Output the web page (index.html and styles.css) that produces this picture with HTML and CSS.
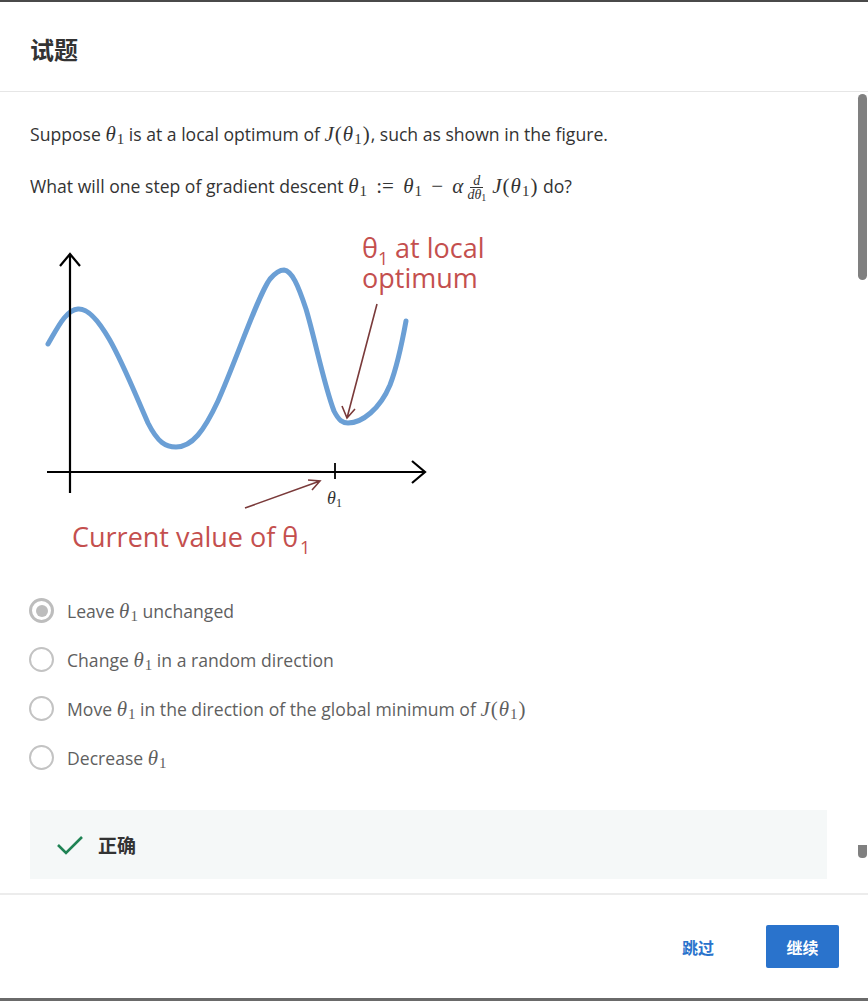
FILE: index.html
```html
<!DOCTYPE html>
<html lang="zh">
<head>
<meta charset="utf-8">
<title>试题</title>
<link rel="stylesheet" href="styles.css">
</head>
<body>
<div class="page">
  <header class="hdr"><h1 class="title">试题</h1></header>
  <main class="content">
    <p class="q">Suppose <span class="m"><i>θ</i><span class="sb">1</span></span> is at a local optimum of <span class="m"><i>J</i><span class="pa">(</span><i>θ</i><span class="sb">1</span><span class="pa">)</span></span>, such as shown in the figure.</p>
    <p class="q q2">What will one step of gradient descent <span class="m"><i>θ</i><span class="sb">1</span> <span class="op">:=</span> <i>θ</i><span class="sb">1</span> <span class="op">−</span> <i>α</i><span class="frac"><span class="num"><i>d</i></span><span class="den"><i>dθ</i><span class="sb2">1</span></span></span><i>J</i><span class="pa">(</span><i>θ</i><span class="sb">1</span><span class="pa">)</span></span> do?</p>
    <svg class="fig" width="470" height="345" viewBox="0 0 470 345">
      <path d="M18,121 C28,104 36,87 48,86 C72,84 100,160 118,200 C128,220 136,224 146,224 C162,224 174,208 188,178 C206,138 228,72 240,56 C246,49 250,47 254,47 C262,48 268,62 276,86 C285,116 294,162 304,188 C309,198 313,200 318,200 C332,200 350,186 360,162 C367,144 372,120 376,98" fill="none" stroke="#6b9fd5" stroke-width="5" stroke-linecap="round"/>
      <path d="M40,31 L40,270 M30,43 L40,31 L50,43" fill="none" stroke="#000" stroke-width="2.2"/>
      <path d="M17,249 L395,249 M382,238 L395,249 L382,260" fill="none" stroke="#000" stroke-width="2.2"/>
      <path d="M305,240 L305,256" stroke="#000" stroke-width="1.8"/>
      <text x="297" y="281" class="axl">θ</text>
      <text x="306" y="284" class="axs">1</text>
      <path d="M215,285 L290,258 M278,257 L290,258 L282,267" fill="none" stroke="#7a3a3a" stroke-width="1.6"/>
      <path d="M347,81 L317,195 M312,183 L317,195 L325,186" fill="none" stroke="#7a3a3a" stroke-width="1.6"/>
      <text x="332" y="35" class="red">θ</text>
      <text x="348" y="42" class="red rs">1</text>
      <text x="365" y="35" class="red">at local</text>
      <text x="332" y="65" class="red">optimum</text>
      <text x="42" y="324" class="red">Current value of θ</text>
      <text x="270" y="331" class="red rs">1</text>
    </svg>
    <ul class="opts">
      <li class="opt"><span class="radio sel"></span><span>Leave <span class="m"><i>θ</i><span class="sb">1</span></span> unchanged</span></li>
      <li class="opt"><span class="radio"></span><span>Change <span class="m"><i>θ</i><span class="sb">1</span></span> in a random direction</span></li>
      <li class="opt"><span class="radio"></span><span>Move <span class="m"><i>θ</i><span class="sb">1</span></span> in the direction of the global minimum of <span class="m"><i>J</i><span class="pa">(</span><i>θ</i><span class="sb">1</span><span class="pa">)</span></span></span></li>
      <li class="opt"><span class="radio"></span><span>Decrease <span class="m"><i>θ</i><span class="sb">1</span></span></span></li>
    </ul>
    <div class="correct">
      <svg class="chk" width="28" height="22" viewBox="0 0 28 22"><path d="M2,11 L10,19 L26,3" fill="none" stroke="#1f8354" stroke-width="2.6"/></svg>
      <span class="ok">正确</span>
    </div>
    <div class="thumb"></div>
    <div class="thumb2"></div>
  </main>
  <footer class="ftr">
    <span class="skip">跳过</span>
    <span class="btn">继续</span>
  </footer>
</div>
</body>
</html>
```
FILE: styles.css
```css
* { box-sizing: border-box; }
html, body { margin: 0; padding: 0; background: #fff; }
body { font-family: "Open Sans", "Noto Sans CJK SC", sans-serif; color: #333; }
.page {
  width: 868px; height: 1001px;
  border-top: 2px solid #4a4a4a;
  border-bottom: 3px solid #6a6a6a;
  display: flex; flex-direction: column;
  overflow: hidden;
}
.hdr {
  height: 90px; flex: none;
  border-bottom: 1px solid #e6e6e6;
  display: flex; align-items: center;
  padding: 3px 30px 0;
}
.title {
  margin: 0;
  font-family: "Noto Sans CJK SC", sans-serif;
  font-size: 24px; font-weight: 700; color: #333;
}
.content {
  flex: 1; position: relative; overflow: hidden;
  padding: 29px 30px 0;
}
.q { margin: 0; font-size: 17.6px; line-height: 26px; color: #333; }
.q2 { margin-top: 26px; }
.m { font-family: "Liberation Serif", "DejaVu Serif", serif; font-size: 21px; line-height: 1; white-space: nowrap; }
.m i { font-style: italic; }
.pa { margin: 0 1px; }
.sb { font-size: 15px; position: relative; top: 3px; font-style: normal; margin-left: 1px; }
.op { margin: 0 4px; }
.frac {
  display: inline-flex; flex-direction: column; align-items: center;
  vertical-align: middle; font-size: 14px; line-height: 13px;
  margin: 0 5px 0 3px;
}
.frac .num { border-bottom: 1px solid #333; padding: 0 3px; }
.frac .den { padding: 0 1px; }
.sb2 { font-size: 10px; position: relative; top: 2px; }
.fig { display: block; margin-top: 21px; }
.red { font-family: "Open Sans", sans-serif; font-size: 27px; fill: #c44f4e; }
.red.rs { font-size: 18px; }
.axl { font-family: "Liberation Serif", serif; font-style: italic; font-size: 18px; fill: #333; }
.axs { font-family: "Liberation Serif", serif; font-size: 12px; fill: #333; }
.opts { list-style: none; margin: 18px 0 0; padding: 0; }
.opt {
  height: 49px; display: flex; align-items: center; gap: 13px;
  font-size: 17.6px; color: #5f5f5f; margin-left: -1px;
}
.radio {
  width: 25px; height: 25px; flex: none; border-radius: 50%;
  border: 2px solid #c3c3c3; background: #fff; position: relative;
}
.radio.sel { border: 3px solid #bdbdbd; }
.radio.sel::after {
  content: ""; position: absolute; left: 3.5px; top: 3.5px;
  width: 12px; height: 12px; border-radius: 50%; background: #bdbdbd;
}
.correct {
  margin-top: 28px; width: 797px; height: 69px;
  background: #f5f8f8;
  display: flex; align-items: center; gap: 14px;
  padding-left: 26px;
}
.chk { display: block; }
.ok { font-family: "Noto Sans CJK SC", sans-serif; font-size: 19px; font-weight: 700; color: #333; }
.thumb {
  position: absolute; right: 1px; top: 2px; width: 9px; height: 186px;
  background: #808080; border-radius: 5px;
}
.thumb2 {
  position: absolute; right: 1px; top: 753px; width: 9px; height: 13px;
  background: #808080; border-radius: 0 0 4px 4px;
}
.ftr {
  height: 105px; flex: none;
  border-top: 2px solid #ececec;
  display: flex; align-items: center; justify-content: flex-end;
  padding-right: 29px;
  font-family: "Noto Sans CJK SC", sans-serif; font-weight: 700; font-size: 16px;
}
.skip { color: #2a73cc; margin-right: 52px; }
.btn {
  width: 73px; height: 43px; background: #2a73cc; color: #fff;
  border-radius: 2px; display: flex; align-items: center; justify-content: center;
}
```
